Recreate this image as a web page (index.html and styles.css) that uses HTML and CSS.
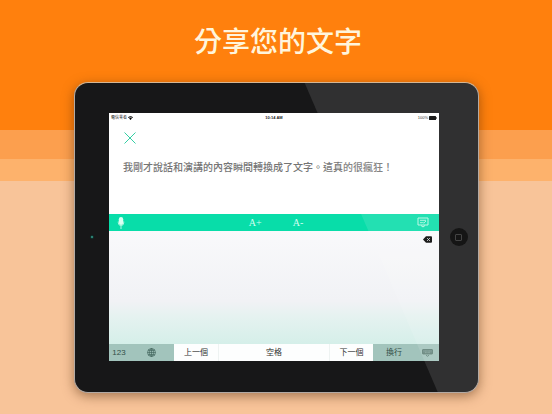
FILE: index.html
```html
<!DOCTYPE html>
<html lang="zh-Hant">
<head>
<meta charset="utf-8">
<meta name="viewport" content="width=device-width, initial-scale=1">
<title>分享您的文字</title>
<link rel="stylesheet" href="styles.css">
</head>
<body>
<main class="page">
  <h1 class="title">分享您的文字</h1>
  <section class="tablet">
    <span class="camera"></span>
    <div class="screen">
      <header class="status">
        <span class="carrier">電信業者
          <svg class="wifi" viewBox="0 0 10 8" aria-hidden="true"><path d="M0 2.4Q5-1.8 10 2.4L8.700 4Q5 1 1.300 4ZM2.200 4.800Q5 2.600 7.800 4.800L5 8Z"/></svg>
        </span>
        <span class="clock">10:14 AM</span>
        <span class="power">100%
          <svg class="battery" viewBox="0 0 16 8" aria-hidden="true"><rect width="14" height="8" rx="1"/><rect x="14.500" y="2.500" width="1.500" height="3"/></svg>
        </span>
      </header>
      <div class="note">
        <button class="icon-button close" aria-label="關閉">
          <svg viewBox="0 0 12 12" width="12" height="12"><path d="M.5.5l11 11M11.500.5l-11 11" fill="none" stroke="#35cfa4" stroke-width="1"/></svg>
        </button>
        <textarea class="note-text" aria-label="文字">我剛才說話和演講的內容瞬間轉換成了文字。這真的很瘋狂！</textarea>
      </div>
      <nav class="toolbar">
        <button class="icon-button mic" aria-label="錄音">
          <svg viewBox="0 0 8 12" width="8" height="12"><rect x="1.800" y="0" width="4.400" height="8" rx="2.200" fill="#d9fff2"/><path d="M1.300 4.500v1.300a2.700 2.700 0 0 0 5.400 0V4.500M4 8.500V12" fill="none" stroke="#b4f7e1" stroke-width="1"/></svg>
        </button>
        <div class="sizes">
          <button class="size">A+</button>
          <button class="size">A-</button>
        </div>
        <button class="icon-button done" aria-label="收起">
          <svg viewBox="0 0 12 11" width="12" height="11"><path d="M1 1h10v7H1ZM4 8.500l2 1.500 2-1.500" fill="none" stroke="#b9f8e4"/><path d="M3 3.300h6M3 5.700h2.500M5.500 5l1.200 1.200L9 4" fill="none" stroke="#b9f8e4" stroke-width=".9"/></svg>
        </button>
      </nav>
      <div class="pad">
        <button class="icon-button" aria-label="刪除">
          <svg viewBox="0 0 9 7" width="9" height="7"><path d="M3 .2H8Q9 .2 9 1.200V5.800Q9 6.800 8 6.800H3L0 3.500Z" fill="#000"/><path d="M4 2l3 3M7 2L4 5" stroke="#ddd" stroke-width=".8"/></svg>
        </button>
      </div>
      <div class="keys">
        <div class="tinted left">
          <button class="key">123</button>
          <button class="key" aria-label="切換語言">
            <svg viewBox="0 0 9 9" width="9" height="9" fill="none" stroke="#42655d" stroke-width=".7"><circle cx="4.500" cy="4.500" r="4"/><ellipse cx="4.500" cy="4.500" rx="2" ry="4"/><path d="M4.500.5v8M.5 4.500h8M1.200 2.400h6.600M1.200 6.600h6.600"/></svg>
          </button>
        </div>
        <button class="key light">上一個</button>
        <button class="key light">空格</button>
        <button class="key light">下一個</button>
        <div class="tinted right">
          <button class="key">換行</button>
          <button class="key" aria-label="隱藏鍵盤">
            <svg viewBox="0 0 11 8" width="11" height="8"><rect x=".5" y=".5" width="10" height="4.500" rx=".5" fill="#67877f" stroke="#55766d" stroke-width=".8"/><path d="M1.500 2h8M3 3.700h5" stroke="#98b8af" stroke-width=".6" stroke-dasharray="1 .4"/><path d="M4 6.200l1.500 1.100L7 6.200" fill="none" stroke="#55766d" stroke-width=".8"/></svg>
          </button>
        </div>
      </div>
    </div>
    <button class="home" aria-label="主畫面"><span class="home-mark"></span></button>
  </section>
</main>
</body>
</html>
```
FILE: styles.css
```css
* {
  box-sizing: border-box;
}

body {
  margin: 0;
  font-family: "Liberation Sans", "Noto Sans CJK TC", sans-serif;
}

button {
  padding: 0;
  border: 0;
  background: none;
  color: inherit;
  font: inherit;
}

svg {
  display: block;
}

.page {
  min-height: 100vh;
  padding: 0 73px 21px 74px;
  background: linear-gradient(#ff800d 130px, #fc9f4e 130px 159px, #fdb26c 159px 181px, #f8c499 181px);
}

.title {
  height: 82px;
  margin: 0;
  padding-left: 3px;
  color: #fff5dc;
  font-family: "Noto Sans CJK TC", sans-serif;
  font-size: 28px;
  font-weight: 500;
  line-height: 80px;
  text-align: center;
}

.tablet {
  position: relative;
  display: grid;
  grid-template-columns: 34px 1fr 39px;
  align-items: center;
  justify-items: center;
  padding: 30px 0 31px;
  border: 1px solid #b3aaa4;
  border-top-color: #d5b693;
  border-radius: 14px;
  background: #171718;
  box-shadow: 0 3px 12px rgba(80, 40, 10, 0.5);
}

/* diagonal glass reflection */
.tablet::after {
  position: absolute;
  inset: 0;
  border-radius: 13px;
  background: rgba(255, 255, 255, 0.11);
  clip-path: polygon(57% 0, 100% 0, 100% 100%, 90% 100%);
  content: "";
  pointer-events: none;
}

.camera {
  width: 4px;
  height: 4px;
  border: 1px solid #0b2a25;
  border-radius: 50%;
  background: #3fa294;
}

.home {
  z-index: 1;
  display: grid;
  place-items: center;
  width: 18px;
  height: 18px;
  border-radius: 50%;
  background: #151515;
}

.home-mark {
  width: 7px;
  height: 7px;
  border: 1px solid #444;
  border-radius: 1px;
}

.screen {
  justify-self: stretch;
  background: #fff;
}

.status {
  display: grid;
  grid-template-columns: 1fr auto 1fr;
  align-items: center;
  height: 9px;
  padding: 0 2px;
  color: #222;
  font-size: 4px;
  line-height: 9px;
}

.carrier,
.power {
  display: flex;
  align-items: center;
  gap: 1px;
}

.power {
  justify-content: flex-end;
}

.clock {
  font-weight: 700;
}

.wifi {
  width: 5px;
  height: 4px;
}

.battery {
  width: 8px;
  height: 4px;
}

.note {
  height: 92px;
  padding: 10px 14px 0;
}

.close {
  display: block;
  margin-left: 1px;
}

.note-text {
  display: block;
  width: 100%;
  height: 48px;
  margin-top: 15px;
  padding: 0;
  border: 0;
  outline: 0;
  background: none;
  color: #757575;
  font-family: "Noto Sans CJK TC", sans-serif;
  font-size: 10px;
  font-weight: 500;
  line-height: 16px;
  resize: none;
}

.toolbar {
  display: grid;
  grid-template-columns: 1fr auto 1fr;
  align-items: center;
  height: 17px;
  padding: 0 10px 0 8px;
  background: #08dda9;
  color: #d2fff0;
}

.sizes {
  display: flex;
  gap: 31px;
  padding-left: 6px;
}

.size {
  font-family: "Liberation Serif", serif;
  font-size: 10px;
  line-height: 16px;
}

.done {
  justify-self: end;
}

.pad {
  display: flex;
  align-items: flex-start;
  justify-content: flex-end;
  height: 113px;
  padding: 5px 7px 0;
  background: linear-gradient(#f9f9fb, #f1f2f5 62%, #e5f2f0 76%, #d5efe9);
}

.keys {
  display: grid;
  grid-template-columns: 65fr 44fr 111fr 44fr 66fr;
  height: 17px;
  color: #333;
  font-size: 8px;
}

.tinted {
  display: grid;
  background: #a2c4bc;
  color: #334f48;
}

.left {
  grid-template-columns: 20fr 45fr;
}

.right {
  grid-template-columns: 42fr 24fr;
}

.key {
  display: grid;
  place-items: center;
  line-height: 16px;
}

.light {
  background: #fdfefe;
}

.light + .light {
  border-left: 1px solid #eef3f2;
}
```
